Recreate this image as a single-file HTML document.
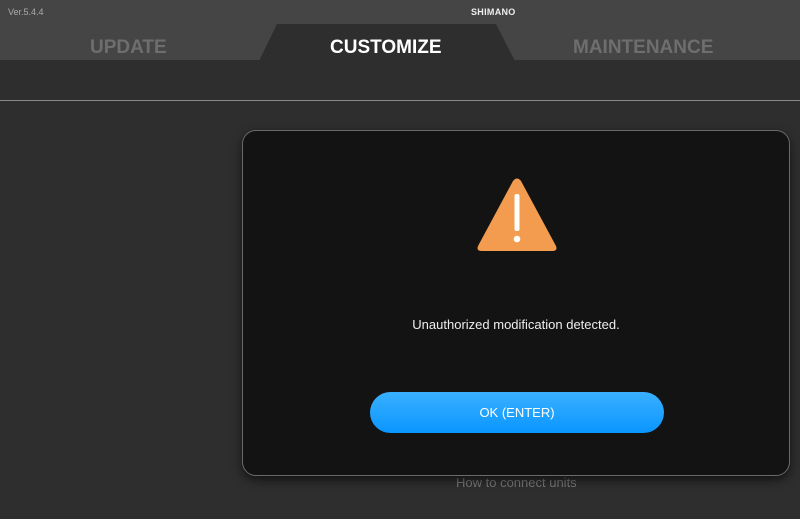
<!DOCTYPE html>
<html><head><style>
*{margin:0;padding:0;box-sizing:border-box}
body{width:800px;height:519px;background:#2e2e2e;font-family:"Liberation Sans",sans-serif;position:relative;overflow:hidden}
.hdr{position:absolute;left:0;top:0;width:800px;height:60px;background:#454545}
.ver{position:absolute;left:8px;top:7px;font-size:9px;color:#aaa}
.logo{position:absolute;left:471px;top:7px;font-size:9px;font-weight:bold;color:#eee;letter-spacing:0.3px}
.tab{position:absolute;top:37px;font-size:19px;font-weight:bold;color:#6e6e6e}
.line{position:absolute;left:0;top:100px;width:800px;height:1px;background:#8a8a8a}
.how{position:absolute;left:456px;top:475px;font-size:13px;color:#777}
.modal{position:absolute;left:242px;top:130px;width:548px;height:346px;background:#131313;border:1px solid #6a6a6a;border-radius:14px;box-shadow:0 4px 10px rgba(0,0,0,.6)}
.msg{position:absolute;left:0;width:100%;top:186px;text-align:center;color:#eee;font-size:13px}
.btn{position:absolute;left:127px;top:261px;width:294px;height:41px;border-radius:21px;background:linear-gradient(#3ab0ff,#0a96ff);color:#fff;font-size:13px;text-align:center;line-height:41px}
</style></head><body>
<div class="hdr"></div>
<div class="ver">Ver.5.4.4</div>
<div class="logo">SHIMANO</div>
<svg style="position:absolute;left:0;top:0" width="800" height="61"><polygon points="277,24 496,24 515,61 259,61" fill="#2e2e2e"/></svg>
<div class="tab" style="left:90px">UPDATE</div>
<div class="tab" style="left:330px;color:#fff">CUSTOMIZE</div>
<div class="tab" style="left:573px">MAINTENANCE</div>
<div class="line"></div>
<div class="how">How to connect units</div>
<div class="modal">
<svg style="position:absolute;left:233px;top:47px" width="82" height="74" viewBox="0 0 82 74"><path d="M37,3 Q41,-2 45,3 L80,68 Q82,73 76,73 L6,73 Q0,73 2,68 Z" fill="#f39c4f"/><rect x="38.5" y="16" width="5" height="37" rx="2" fill="#fff"/><circle cx="41" cy="61" r="3.3" fill="#fff"/></svg>
<div class="msg">Unauthorized modification detected.</div>
<div class="btn">OK (ENTER)</div>
</div>
</body></html>
